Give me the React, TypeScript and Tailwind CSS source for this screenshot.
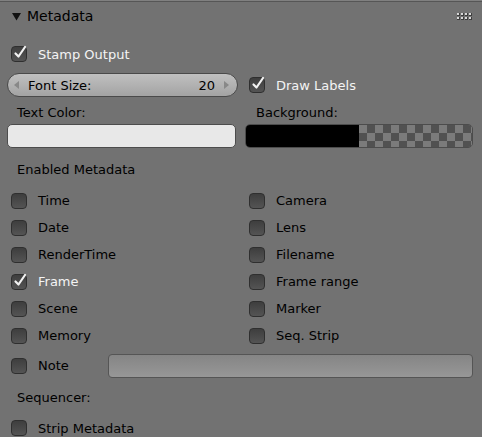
import React from 'react';

const font = { fontFamily: '"DejaVu Sans", "Liberation Sans", sans-serif' };

const CheckBox: React.FC<{ checked?: boolean }> = ({ checked }) => (
  <span className="relative inline-block w-[16px] h-[16px] shrink-0 rounded-[4px] border border-[#2f2f2f] bg-gradient-to-b from-[#3e3e3e] to-[#545454]">
    {checked && (
      <svg
        className="absolute left-[1px] top-[-3px] overflow-visible"
        width="14"
        height="16"
        viewBox="0 0 14 16"
      >
        <path d="M2.5 9.5 L5.5 12.5 L12 3" fill="none" stroke="#f2f2f2" strokeWidth="2.2" strokeLinecap="round" strokeLinejoin="round" />
      </svg>
    )}
  </span>
);

interface CheckRowProps {
  label: string;
  checked?: boolean;
}

const CheckRow: React.FC<CheckRowProps> = ({ label, checked }) => (
  <div className="flex items-center gap-[11px] pl-[4px] h-full">
    <CheckBox checked={checked} />
    <span className={`text-[13px] leading-none ${checked ? 'text-[#f4f4f4]' : 'text-black'}`}>{label}</span>
  </div>
);

const left = ['Time', 'Date', 'RenderTime', 'Frame', 'Scene', 'Memory'];
const right = ['Camera', 'Lens', 'Filename', 'Frame range', 'Marker', 'Seq. Strip'];

export default function App() {
  return (
    <div className="w-[482px] h-[437px] overflow-hidden bg-[#727272] select-none" style={font}>
      {/* Header */}
      <div className="h-[1px] bg-[#808080]" />
      <div className="h-[1px] bg-[#565656]" />
      <div className="h-[28px] flex items-center pl-[12px] pr-[10px]">
        <svg width="9" height="9" viewBox="0 0 9 9" className="mt-[1px]">
          <polygon points="0,1 9,1 4.5,8.5" fill="#111" />
        </svg>
        <span className="ml-[6px] text-[14px] text-black leading-none">Metadata</span>
        <svg className="ml-auto mt-[1px]" width="15" height="8" viewBox="0 0 15 8">
          {[0, 4, 8, 12].map((x) =>
            [0, 4].map((y) => (
              <g key={`${x}-${y}`}>
                <rect x={x} y={y} width="3" height="3" fill="#3e3e3e" />
                <rect x={x} y={y} width="2" height="2" fill="#d8d8d8" />
              </g>
            ))
          )}
        </svg>
      </div>

      <div className="px-[7px]">
        {/* Stamp Output */}
        <div className="h-[24px] mt-[12px]">
          <CheckRow label="Stamp Output" checked />
        </div>

        {/* Font size + Draw labels */}
        <div className="flex mt-[7px] h-[24px]">
          <div className="w-[231px] h-[24px] rounded-full border border-[#4a4a4a] bg-gradient-to-b from-[#c0c0c0] to-[#a3a3a3] flex items-center pl-[6px] pr-[8px]">
            <svg width="5" height="8" viewBox="0 0 5 8">
              <polygon points="5,0 5,8 0,4" fill="#888" />
            </svg>
            <span className="ml-[9px] text-[13px] text-black leading-none">Font Size:</span>
            <span className="ml-auto text-[13px] text-black leading-none">20</span>
            <svg className="ml-[9px]" width="5" height="8" viewBox="0 0 5 8">
              <polygon points="0,0 0,8 5,4" fill="#888" />
            </svg>
          </div>
          <div className="ml-[7px] flex-1">
            <CheckRow label="Draw Labels" checked />
          </div>
        </div>

        {/* Colors */}
        <div className="flex mt-[3px]">
          <div className="w-[229px]">
            <div className="h-[24px] flex items-center pl-[10px] text-[13px] text-black leading-none">Text Color:</div>
            <div className="h-[24px] rounded-[5px] border border-[#4c4c4c] bg-[#e8e8e8]" />
          </div>
          <div className="ml-[9px] w-[228px]">
            <div className="h-[24px] flex items-center pl-[11px] text-[13px] text-black leading-none">Background:</div>
            <div className="h-[24px] rounded-[5px] border border-[#4c4c4c] overflow-hidden flex">
              <div className="w-[113px] bg-black" />
              <div className="flex-1 bg-[image:repeating-conic-gradient(#515151_0_25%,#7b7b7b_0_50%)] bg-[length:16px_16px]" />
            </div>
          </div>
        </div>

        {/* Enabled metadata */}
        <div className="h-[26px] mt-[8px] flex items-center pl-[10px] text-[13px] text-black leading-none">
          Enabled Metadata
        </div>

        <div className="flex mt-[5px]">
          <div className="w-[238px]">
            {left.map((l) => (
              <div key={l} className="h-[27px]">
                <CheckRow label={l} checked={l === 'Frame'} />
              </div>
            ))}
          </div>
          <div className="flex-1">
            {right.map((r) => (
              <div key={r} className="h-[27px]">
                <CheckRow label={r} />
              </div>
            ))}
          </div>
        </div>

        {/* Note */}
        <div className="h-[33px] flex items-center">
          <div className="w-[101px] h-full">
            <CheckRow label="Note" />
          </div>
          <div className="w-[365px] h-[24px] rounded-[4px] border border-[#555] bg-gradient-to-b from-[#858585] to-[#979797]" />
        </div>

        {/* Sequencer */}
        <div className="h-[30px] flex items-center pl-[10px] text-[13px] text-black leading-none">Sequencer:</div>
        <div className="h-[32px]">
          <CheckRow label="Strip Metadata" />
        </div>
      </div>
    </div>
  );
}
